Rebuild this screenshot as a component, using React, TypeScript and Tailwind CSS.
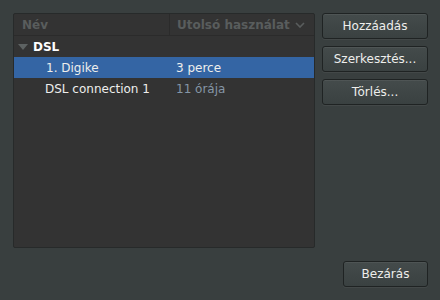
import React from "react";

const font = { fontFamily: '"DejaVu Sans", sans-serif' };

function Btn({ children, className = "" }: { children: React.ReactNode; className?: string }) {
  return (
    <div
      className={
        "flex items-center justify-center rounded-[3px] border border-[#1f2323] bg-gradient-to-b from-[#444b4b] to-[#3a4141] text-[12px] text-[#eeeeec] shadow-[inset_0_1px_0_rgba(255,255,255,0.06),0_1px_0_rgba(255,255,255,0.05)] " +
        className
      }
    >
      {children}
    </div>
  );
}

export default function App() {
  return (
    <div style={font} className="w-[440px] h-[300px] bg-[#393f3f] flex flex-col pt-[13px] pl-[13px] pr-[12px]">
      <div className="flex gap-[7px]">
        <div className="w-[302px] h-[235px] bg-[#333333] border border-[#272a2a] rounded-[2px] flex flex-col text-[12px]">
          <div className="flex h-[22px] border-b border-[#2b2b2b] font-bold text-[#595d5d]">
            <div className="w-[156px] border-r border-[#2b2b2b] flex items-center pl-[8px]">Név</div>
            <div className="flex-1 flex items-center pl-[7px]">
              <span>Utolsó használat</span>
              <svg width="10" height="6" viewBox="0 0 10 6" className="ml-[5px]">
                <path d="M1 1 L5 5 L9 1" fill="none" stroke="#595d5d" strokeWidth="1.6" />
              </svg>
            </div>
          </div>
          <div className="flex h-[21px] items-center text-white font-bold">
            <svg width="10" height="6" viewBox="0 0 10 6" className="ml-[4px] mr-[5px]">
              <path d="M0 0 L10 0 L5 6 Z" fill="#5d6262" />
            </svg>
            <span>DSL</span>
          </div>
          <div className="flex h-[21px] items-center bg-[#3465a4] text-[#eeeeec]">
            <div className="w-[157px] pl-[32px]">1. Digike</div>
            <div className="pl-[5px]">3 perce</div>
          </div>
          <div className="flex h-[21px] items-center text-[#eeeeec]">
            <div className="w-[157px] pl-[31px]">DSL connection 1</div>
            <div className="pl-[5px] text-[#8596a6]">11 órája</div>
          </div>
        </div>
        <div className="flex flex-col gap-[7px] w-[106px]">
          <Btn className="h-[26px]">Hozzáadás</Btn>
          <Btn className="h-[26px]">Szerkesztés...</Btn>
          <Btn className="h-[26px]">Törlés...</Btn>
        </div>
      </div>
      <div className="flex justify-end mt-[13px]">
        <Btn className="w-[85px] h-[26px]">Bezárás</Btn>
      </div>
    </div>
  );
}
